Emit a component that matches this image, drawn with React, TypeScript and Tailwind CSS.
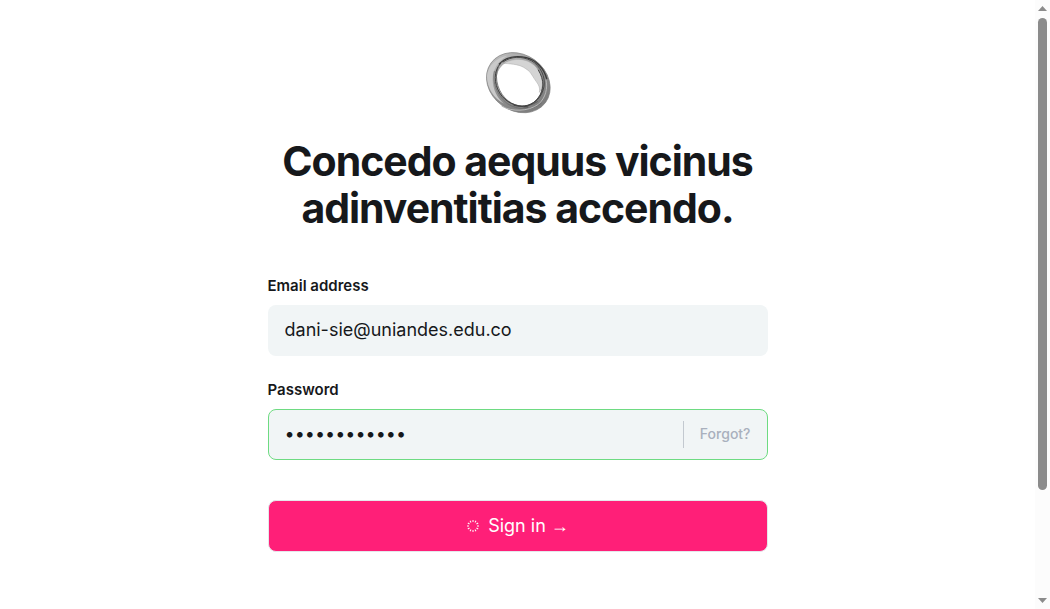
import React, { useState } from 'react'

// Angles of the twelve spokes in the loading ring
const SPOKES = [0, 30, 60, 90, 120, 150, 180, 210, 240, 270, 300, 330]

const Logo: React.FC = () => (
  <svg width="66" height="62" viewBox="21 24 198 186" role="img" aria-label="Logo">
    <defs>
      <linearGradient id="ring" x1="0" y1="0.3" x2="1" y2="0.6">
        <stop offset="0" stopColor="#bdbdbd" />
        <stop offset="0.5" stopColor="#8f8f8f" />
        <stop offset="1" stopColor="#7c7c7c" />
      </linearGradient>
    </defs>
    <g transform="rotate(36 121 116)">
      <ellipse cx="121" cy="116" rx="101" ry="84" fill="url(#ring)" stroke="#7d7d7d" strokeWidth="2" />
    </g>
    <ellipse cx="123" cy="117" rx="73" ry="62" transform="rotate(48 123 117)" fill="#fff" />
    <path fill="#d4d4d4" stroke="#aaa" strokeWidth="1.5"
      d="M78 58C117 36 160 46 181 78C197 105 197 128 184 145C188 126 176 116 168 103C158 87 156 82 143 74C128 62 105 60 78 58Z" />
    <path fill="#cacaca" d="M27 96C29 66 54 41 88 35C61 50 44 75 44 105C44 137 58 162 78 179C48 164 27 132 27 96Z" />
    <g fill="none" strokeLinecap="round">
      <path stroke="#3a3a3a" strokeWidth="4" d="M64 60C82 40 113 33 145 41C177 49 198 75 206 104" />
      <path stroke="#4a4a4a" strokeWidth="3" d="M75 54C100 36 131 36 160 50C188 66 203 98 198 128C192 158 172 181 139 188" />
      <path stroke="#3e3e3e" strokeWidth="3" d="M68 58C45 81 48 119 65 147C82 174 112 189 150 189" />
      <path stroke="#454545" strokeWidth="2" d="M60 70C47 105 62 149 91 171C116 190 150 192 178 173" />
      <path stroke="#666" strokeWidth="2" d="M49 82C42 117 57 154 88 179C120 199 160 201 190 178" />
      <path stroke="#454545" strokeWidth="3" d="M181 78C200 109 199 139 180 162C166 182 138 192 108 184" />
      <path stroke="#b8b8b8" strokeWidth="3" d="M72 187C102 204 150 203 181 181C203 162 210 132 204 108" />
    </g>
  </svg>
)

const Spinner: React.FC = () => (
  <svg width="14" height="14" viewBox="0 0 14 14" stroke="#fff" strokeWidth="1" aria-hidden="true">
    {SPOKES.map(a => (
      <line key={a} x1="7" y1="1" x2="7" y2="3" transform={`rotate(${a} 7 7)`} />
    ))}
  </svg>
)

// Decorative rail that stands in for the system scrollbar
const ScrollRail: React.FC = () => (
  <div aria-hidden="true" className="sticky top-0 flex h-screen w-[15px] shrink-0 flex-col items-center bg-[#fcfcfc] py-1.5">
    <svg width="9" height="5" viewBox="0 0 9 5" className="shrink-0" fill="#8b8b8b"><path d="M0 5L4.5 0L9 5Z" /></svg>
    <div className="mt-[7px] mb-1 flex w-full flex-1 flex-col items-center">
      <div className="h-[82%] w-[9px] rounded-full bg-[#8b8b8b]" />
    </div>
    <svg width="9" height="5" viewBox="0 0 9 5" className="shrink-0" fill="#8b8b8b"><path d="M0 0L4.5 5L9 0Z" /></svg>
  </div>
)

const App: React.FC = () => {
  const [email, setEmail] = useState('dani-sie@uniandes.edu.co')
  const [password, setPassword] = useState('abcdefghijkl')

  return (
    <div className="flex min-h-screen bg-white font-['Inter',sans-serif] text-[#16181b]">
      <main className="flex min-w-0 flex-1 flex-col items-center px-4 pt-[52px] pb-14">
        <Logo />
        <h1 className="mt-6 max-w-[500px] text-center text-[41px] leading-[47px] font-bold tracking-tight">
          Concedo aequus vicinus adinventitias accendo.
        </h1>

        <form className="mt-11 flex w-full max-w-[500px] flex-col" onSubmit={e => e.preventDefault()}>
          <label htmlFor="email" className="text-[15px] leading-5 font-semibold">Email address</label>
          <input id="email" type="email" value={email} onChange={e => setEmail(e.target.value)}
            className="mt-[9px] h-[51px] w-full rounded-lg bg-[#f1f5f6] px-[17px] pb-0.5 text-lg outline-none" />

          <label htmlFor="password" className="mt-6 text-[15px] leading-5 font-semibold">Password</label>
          <div className="mt-[9px] flex h-[51px] items-center rounded-lg border border-[#6edb82] bg-[#f1f5f6] px-4">
            <input id="password" type="password" value={password} onChange={e => setPassword(e.target.value)}
              className="min-w-0 flex-1 bg-transparent pb-0.5 text-lg outline-none" />
            <a href="#" className="border-l border-[#c3c9d0] pb-0.5 pl-4 text-sm leading-[25px] font-medium text-[#a9b0bd]">Forgot?</a>
          </div>

          <button type="submit"
            className="mt-10 flex h-[52px] w-full items-center justify-center gap-2 rounded-lg border border-[#e5e7eb] bg-[#ff1f78] text-lg text-white">
            <Spinner />
            <span>Sign in <span className="font-['Liberation_Sans',sans-serif] text-lg">→</span></span>
          </button>
        </form>
      </main>
      <ScrollRail />
    </div>
  )
}

export default App
